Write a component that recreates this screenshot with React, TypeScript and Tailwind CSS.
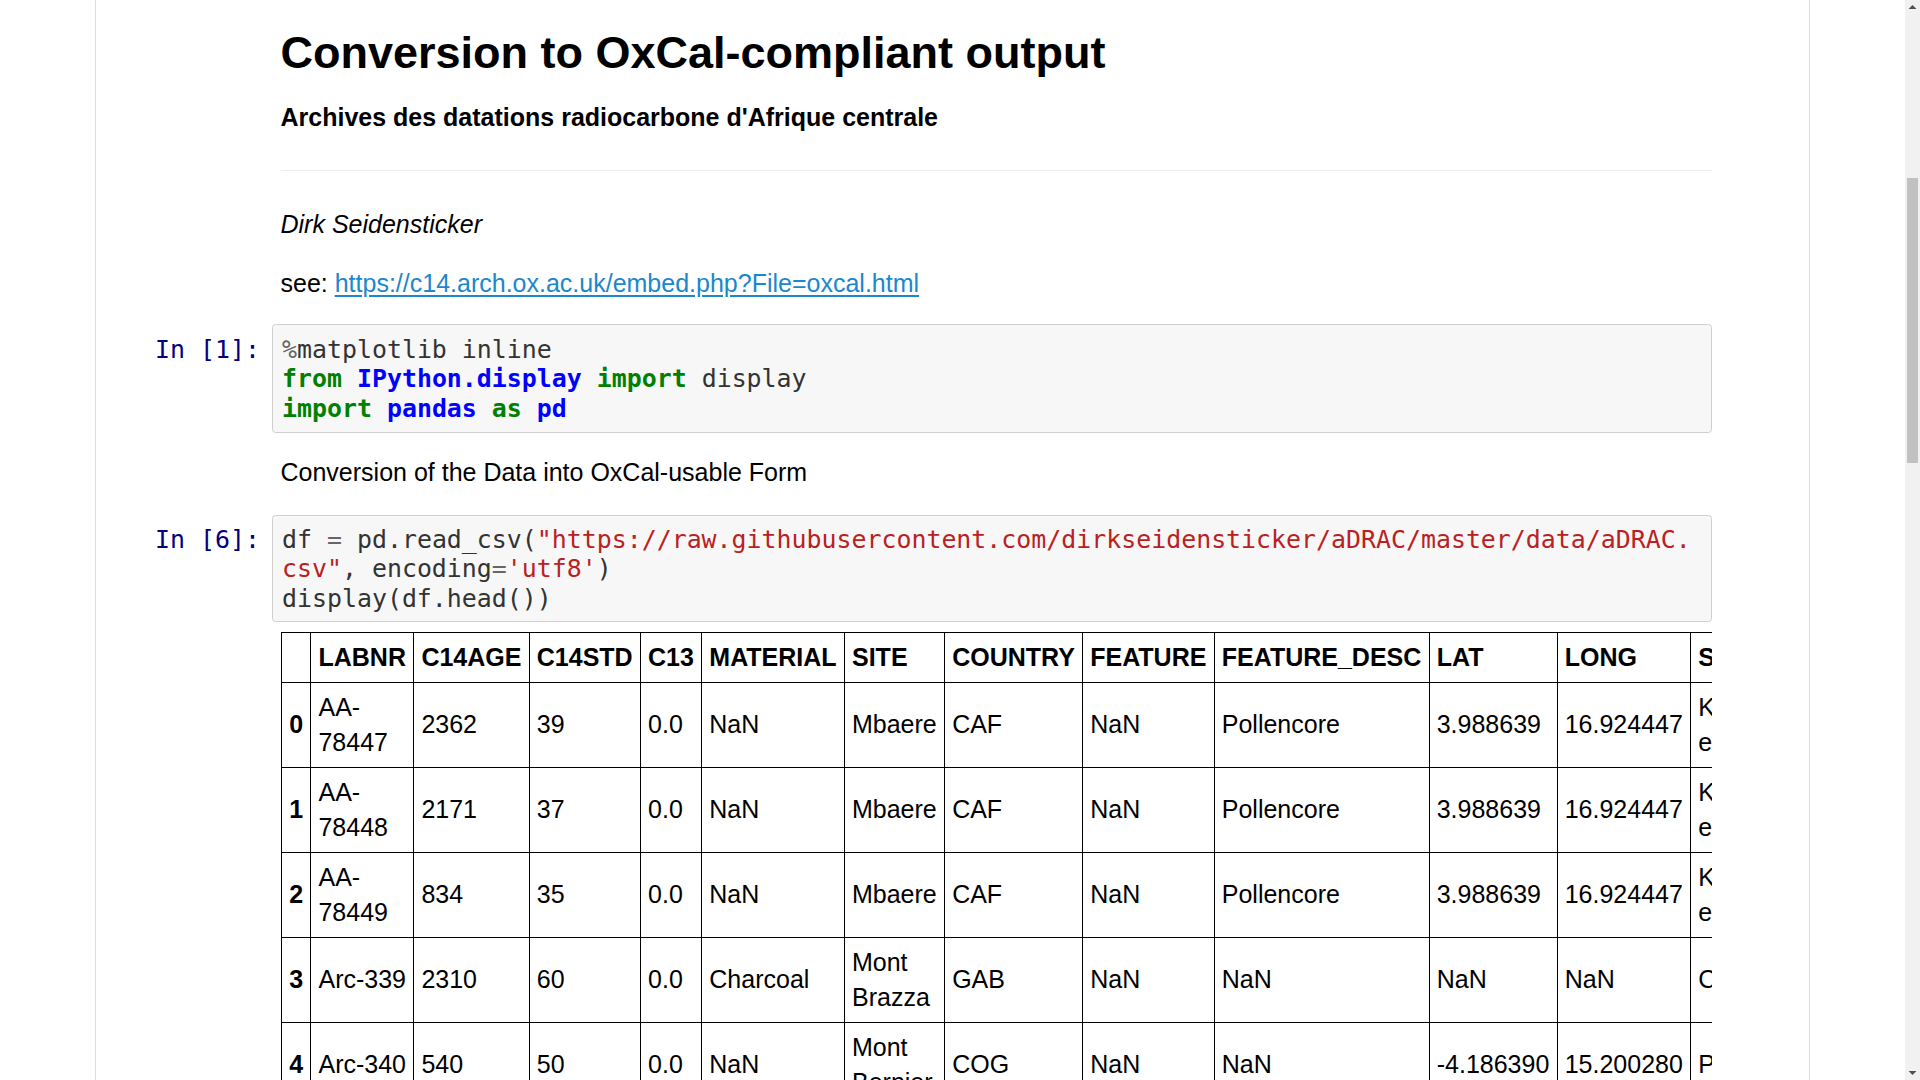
import React from "react";

const sans = { fontFamily: '"Liberation Sans", Arial, sans-serif' };

function Prompt({ n, top }: { n: number; top: string }) {
  return (
    <div
      className={
        top +
        " w-[176px] shrink-0 pr-[12px] text-right font-['DejaVu_Sans_Mono',monospace] text-[24.9px] leading-[29.4px] text-[#000080] whitespace-pre"
      }
    >
      {`In [${n}]:`}
    </div>
  );
}

const K = ({ children }: { children: React.ReactNode }) => (
  <span className="font-bold text-[#008000]">{children}</span>
);
const B = ({ children }: { children: React.ReactNode }) => (
  <span className="font-bold text-[#0000ff]">{children}</span>
);
const S = ({ children }: { children: React.ReactNode }) => (
  <span className="text-[#ba2121]">{children}</span>
);

function CodeBox({ children, pad }: { children: React.ReactNode; pad: string }) {
  return (
    <div
      className={
        pad +
        " w-[1440px] shrink-0 rounded-[3.5px] border border-[#cfcfcf] bg-[#f7f7f7] pl-[9px] font-['DejaVu_Sans_Mono',monospace] text-[24.9px] leading-[29.4px] text-[#333333]"
      }
    >
      {children}
    </div>
  );
}

const cols = [
  "LABNR",
  "C14AGE",
  "C14STD",
  "C13",
  "MATERIAL",
  "SITE",
  "COUNTRY",
  "FEATURE",
  "FEATURE_DESC",
  "LAT",
  "LONG",
  "SOURCE",
];

const rows: string[][] = [
  ["AA-78447", "2362", "39", "0.0", "NaN", "Mbaere", "CAF", "NaN", "Pollencore", "3.988639", "16.924447", "Kiahtipes e2011"],
  ["AA-78448", "2171", "37", "0.0", "NaN", "Mbaere", "CAF", "NaN", "Pollencore", "3.988639", "16.924447", "Kiahtipes e2011"],
  ["AA-78449", "834", "35", "0.0", "NaN", "Mbaere", "CAF", "NaN", "Pollencore", "3.988639", "16.924447", "Kiahtipes e2011"],
  ["Arc-339", "2310", "60", "0.0", "Charcoal", "Mont Brazza", "GAB", "NaN", "NaN", "NaN", "NaN", "Clist1995"],
  ["Arc-340", "540", "50", "0.0", "NaN", "Mont Bernier", "COG", "NaN", "NaN", "-4.186390", "15.200280", "Peyrot1991"],
];

export default function App() {
  return (
    <div className="flex h-[1080px] w-[1920px] overflow-hidden bg-white" style={sans}>
      <div className="relative h-full w-[1905px] shrink-0 overflow-hidden">
        <div className="ml-[95px] h-full w-[1715px] border-x border-[#dddddd] bg-white text-black">
          {/* Markdown cell */}
          <div className="flex">
            <div className="w-[176px] shrink-0" />
            <div className="w-[1440px] shrink-0 pl-[8.5px]">
              <h1 className="mt-[30px] text-[45px] font-bold leading-[45px]">
                Conversion to OxCal-compliant output
              </h1>
              <h4 className="mt-[24.6px] text-[25px] font-bold leading-[35px]">
                Archives des datations radiocarbone d'Afrique centrale
              </h4>
              <div className="mt-[35.5px] h-px bg-[#eeeeee]" />
              <p className="mt-[36.2px] text-[25px] italic leading-[35px]">Dirk Seidensticker</p>
              <p className="mt-[24px] text-[25px] leading-[35px]">
                see:{" "}
                <span className="text-[#1b87cc] underline underline-offset-[3px]">
                  https://c14.arch.ox.ac.uk/embed.php?File=oxcal.html
                </span>
              </p>
            </div>
          </div>

          {/* Code cell 1 */}
          <div className="mt-[22.5px] flex">
            <Prompt n={1} top="pt-[11px]" />
            <CodeBox pad="pt-[10px] pb-[8.5px]">
              <div className="whitespace-pre">
                <span className="text-[#666666]">%</span>matplotlib inline
              </div>
              <div className="whitespace-pre">
                <K>from</K> <B>IPython.display</B> <K>import</K> display
              </div>
              <div className="whitespace-pre">
                <K>import</K> <B>pandas</B> <K>as</K> <B>pd</B>
              </div>
            </CodeBox>
          </div>

          {/* Markdown cell 2 */}
          <div className="mt-[22.9px] flex">
            <div className="w-[176px] shrink-0" />
            <div className="w-[1440px] shrink-0 pl-[8.5px]">
              <p className="text-[25px] leading-[35px]">Conversion of the Data into OxCal-usable Form</p>
            </div>
          </div>

          {/* Code cell 2 */}
          <div className="mt-[24.7px] flex">
            <Prompt n={6} top="pt-[10px]" />
            <CodeBox pad="pt-[9px] pb-[8px]">
              <div className="whitespace-pre">
                df <span className="text-[#666666]">=</span> pd.read_csv(
                <S>"https://raw.githubusercontent.com/dirkseidensticker/aDRAC/master/data/aDRAC.</S>
              </div>
              <div className="whitespace-pre">
                <S>csv"</S>, encoding<span className="text-[#666666]">=</span>
                <S>'utf8'</S>)
              </div>
              <div className="whitespace-pre">display(df.head())</div>
            </CodeBox>
          </div>

          {/* Output */}
          <div className="mt-[9.5px] flex">
            <div className="w-[176px] shrink-0" />
            <div className="w-[1440px] shrink-0 overflow-hidden pl-[9px]">
              <table className="w-min border-collapse border border-black text-[25px] leading-[35px]">
                <thead>
                  <tr>
                    <th className="border border-black px-[7.2px] py-[7px]" />
                    {cols.map((c) => (
                      <th key={c} className="border border-black px-[7.2px] py-[7px] text-left align-middle font-bold whitespace-nowrap">
                        {c}
                      </th>
                    ))}
                  </tr>
                </thead>
                <tbody>
                  {rows.map((r, i) => (
                    <tr key={i}>
                      <th className="border border-black px-[7.2px] py-[7px] text-left align-middle font-bold">{i}</th>
                      {r.map((v, j) => (
                        <td
                          key={j}
                          className={
                            v.startsWith("Arc-")
                              ? "border border-black px-[7.2px] py-[7px] text-left align-middle font-normal whitespace-nowrap"
                              : "border border-black px-[7.2px] py-[7px] text-left align-middle font-normal"
                          }
                        >
                          {v}
                        </td>
                      ))}
                    </tr>
                  ))}
                </tbody>
              </table>
            </div>
          </div>
        </div>
      </div>

      {/* Scrollbar */}
      <div className="relative h-full w-[15px] shrink-0 bg-[#f1f1f1]">
        <svg className="absolute left-[3px] top-[4px]" width="9" height="6" viewBox="0 0 9 6">
          <polygon points="4.5,1 8.5,5 0.5,5" fill="#505050" />
        </svg>
        <div className="absolute left-[2px] top-[178px] h-[285px] w-[11px] bg-[#c1c1c1]" />
        <svg className="absolute bottom-[4px] left-[3px]" width="9" height="6" viewBox="0 0 9 6">
          <polygon points="0.5,1 8.5,1 4.5,5" fill="#505050" />
        </svg>
      </div>
    </div>
  );
}
